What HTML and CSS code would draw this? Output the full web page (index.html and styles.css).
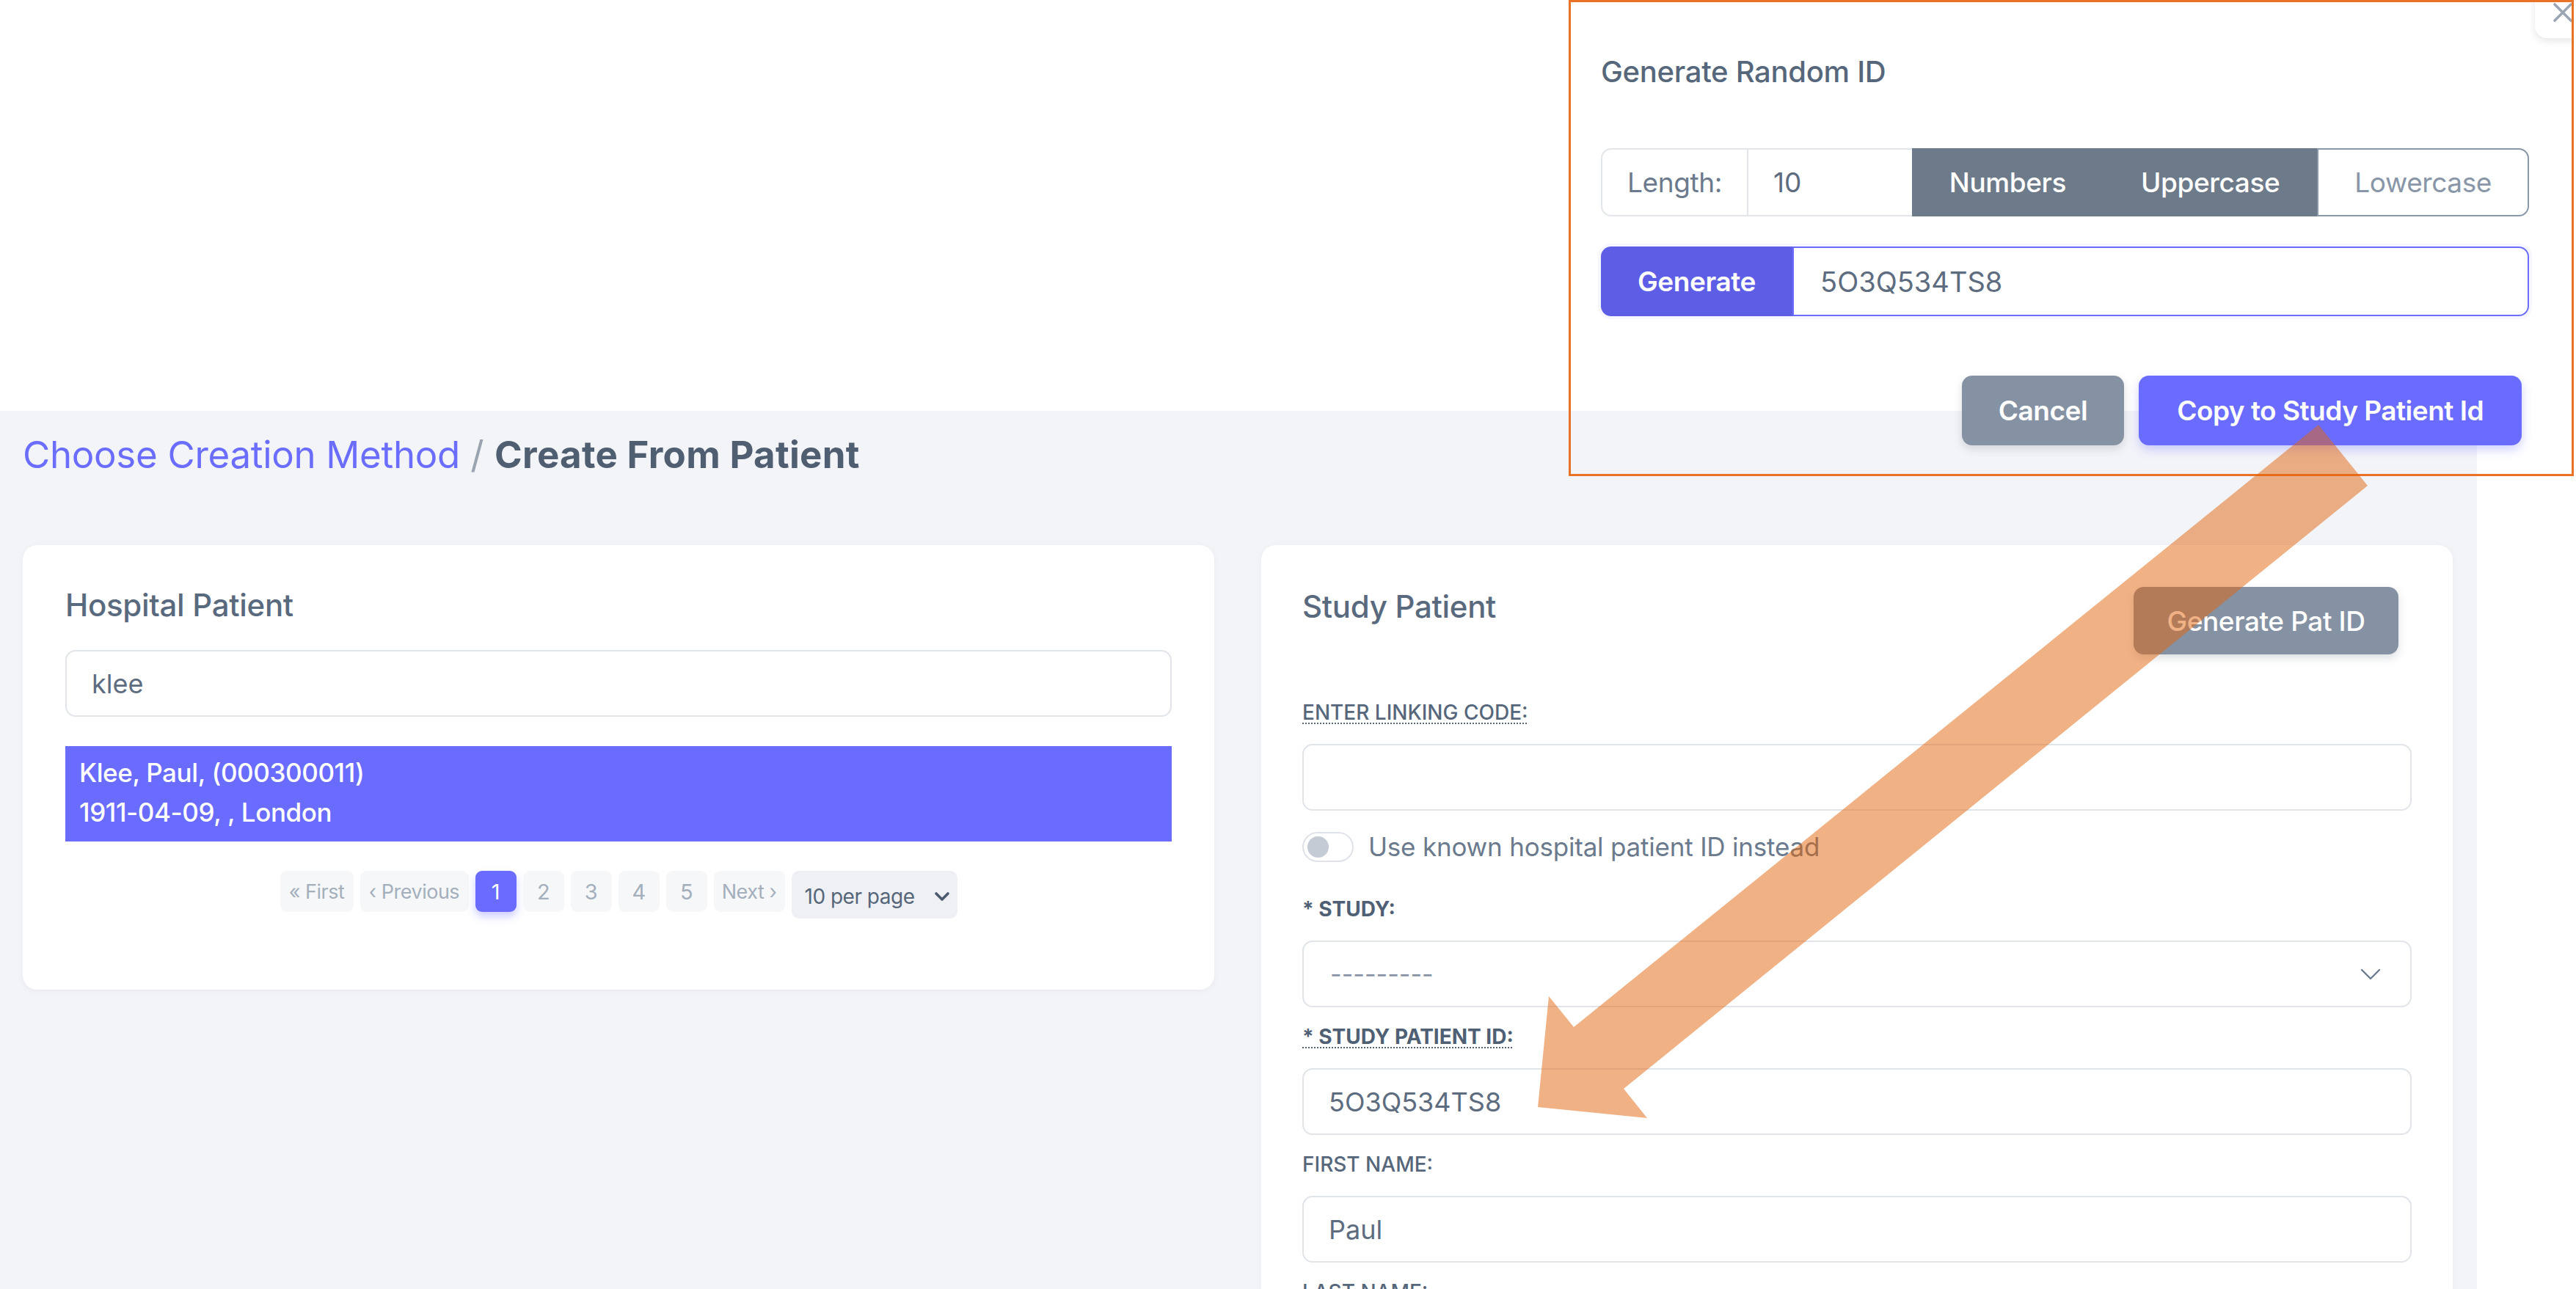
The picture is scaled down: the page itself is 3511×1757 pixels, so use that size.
FILE: index.html
```html
<!DOCTYPE html>
<html lang="en">
<head>
<meta charset="utf-8">
<title>Create From Patient</title>
<link rel="stylesheet" href="styles.css">
</head>
<body>
<div class="page-top"></div>
<main class="content">
  <nav class="breadcrumb"><span class="crumb-link">Choose Creation Method</span> <span class="crumb-sep">/</span> <span class="crumb-current">Create From Patient</span></nav>
  <div class="cols">
    <section class="card card-hospital">
      <h2 class="card-title">Hospital Patient</h2>
      <input class="ctl search" type="text" value="klee">
      <div class="result">
        <div>Klee, Paul, (000300011)</div>
        <div>1911-04-09, , London</div>
      </div>
      <div class="pager">
        <span class="pg pg-first">« First</span>
        <span class="pg pg-prev">‹ Previous</span>
        <span class="pg pg-num active">1</span>
        <span class="pg pg-num">2</span>
        <span class="pg pg-num">3</span>
        <span class="pg pg-num">4</span>
        <span class="pg pg-num">5</span>
        <span class="pg pg-next">Next ›</span>
        <span class="per-page">10 per page <svg class="per-chev" viewBox="0 0 22 14" width="22" height="14"><path d="M3 3l8 8 8-8" fill="none" stroke="#4b5a6d" stroke-width="3.6" stroke-linecap="round" stroke-linejoin="round"/></svg></span>
      </div>
    </section>
    <section class="card card-study">
      <div class="study-head">
        <h2 class="card-title study-title">Study Patient</h2>
        <button class="btn btn-gray btn-genpat">Generate Pat ID</button>
      </div>
      <div class="form">
        <div class="field">
          <label class="lbl dotted">Enter linking code:</label>
          <input class="ctl" type="text" value="">
        </div>
        <div class="toggle-row">
          <span class="switch"><span class="knob"></span></span>
          <span class="toggle-text">Use known hospital patient ID instead</span>
        </div>
        <div class="field">
          <label class="lbl strong">* Study:</label>
          <div class="ctl select"><span class="select-val">---------</span><svg class="sel-chev" viewBox="0 0 28 16" width="28" height="16"><path d="M2 2l12 12 12-12" fill="none" stroke="#6c7b8d" stroke-width="2.4" stroke-linecap="round" stroke-linejoin="round"/></svg></div>
        </div>
        <div class="field">
          <label class="lbl strong dotted">* Study patient ID:</label>
          <input class="ctl" type="text" value="5O3Q534TS8">
        </div>
        <div class="field">
          <label class="lbl">First name:</label>
          <input class="ctl" type="text" value="Paul">
        </div>
        <div class="field">
          <label class="lbl">Last name:</label>
          <input class="ctl" type="text" value="Klee">
        </div>
      </div>
    </section>
  </div>
</main>

<div class="modal">
  <span class="modal-close"><svg viewBox="0 0 28 28" width="28" height="28"><path d="M3 3l22 22M25 3L3 25" stroke="#9ba6b3" stroke-width="3.6" stroke-linecap="round"/></svg></span>
  <h3 class="modal-title">Generate Random ID</h3>
  <div class="igroup row-length">
    <span class="addon">Length:</span>
    <input class="ig-input" type="text" value="10">
    <span class="opt on">Numbers</span>
    <span class="opt on">Uppercase</span>
    <span class="opt off">Lowercase</span>
  </div>
  <div class="igroup row-gen">
    <span class="btn-generate">Generate</span>
    <input class="ig-input gen-input" type="text" value="5O3Q534TS8">
  </div>
  <div class="modal-foot">
    <button class="btn btn-gray btn-cancel">Cancel</button>
    <button class="btn btn-primary btn-copy">Copy to Study Patient Id</button>
  </div>
</div>

<svg class="annot" viewBox="0 0 3511 1757" width="3511" height="1757">
  <polygon points="3160,579 3227,662 2213,1484 2245,1524 2096,1509 2111,1358 2145,1400" fill="rgba(226,100,12,0.5)"/>
</svg>
</body>
</html>
```
FILE: styles.css
```css
html, body {
  margin: 0;
  padding: 0;
  width: 3511px;
  height: 1757px;
  overflow: hidden;
  background: #ffffff;
  font-family: Inter, "Noto Sans", "Liberation Sans", sans-serif;
  color: #5a6a7e;
}

.page-top {
  height: 560px;
}

.content {
  width: 3376px;
  min-height: 1197px;
  box-sizing: border-box;
  background: #f3f4f8;
  padding: 29px 33px 0 31px;
}

.breadcrumb {
  font-size: 51px;
  line-height: 61px;
  white-space: nowrap;
}
.crumb-link { color: #6b6dff; letter-spacing: -0.3px; }
.crumb-sep { color: #9aa4b0; }
.crumb-current { color: #4f5e71; font-weight: 700; letter-spacing: 0.3px; }

.cols {
  display: grid;
  grid-template-columns: 1fr 1fr;
  column-gap: 64px;
  margin-top: 93px;
  align-items: start;
}

.card {
  background: #ffffff;
  border-radius: 20px;
  box-shadow: 0 2px 10px rgba(40, 50, 90, 0.05);
}

.card-title {
  margin: 0;
  font-size: 42px;
  line-height: 50px;
  font-weight: 500;
  color: #5a6a7e;
  letter-spacing: -0.3px;
}

.card-hospital {
  padding: 57px 58px 97px;
  display: flex;
  flex-direction: column;
}
.card-hospital .card-title { margin-bottom: 36px; }

.ctl {
  display: block;
  box-sizing: border-box;
  width: 100%;
  height: 91px;
  margin: 0;
  border: 2px solid #e1e5ea;
  border-radius: 14px;
  background: #fff;
  padding: 0 34px;
  font: inherit;
  font-size: 36px;
  color: #5d6c7f;
  outline: none;
}

.result {
  margin-top: 40px;
  background: #6a6cff;
  color: #ffffff;
  font-size: 35px;
  font-weight: 500;
  line-height: 53.5px;
  padding: 10px 19px 13px;
  letter-spacing: -0.4px;
}

.pager {
  margin-top: 40px;
  display: flex;
  justify-content: center;
  align-items: flex-start;
  gap: 9px;
}
.pg {
  height: 56px;
  box-sizing: border-box;
  display: flex;
  align-items: center;
  justify-content: center;
  background: #f6f7f9;
  border-radius: 9px;
  color: #a4afbc;
  font-size: 27px;
  letter-spacing: -0.5px;
}
.pg-num { width: 56px; font-size: 29px; }
.pg-first { width: 100px; }
.pg-prev { width: 148px; }
.pg-next { width: 97px; }
.pg.active {
  background: #6a6cff;
  color: #fff;
  box-shadow: 0 6px 12px rgba(106, 108, 255, 0.35);
}
.per-page {
  height: 65px;
  width: 226px;
  box-sizing: border-box;
  display: flex;
  align-items: center;
  justify-content: space-between;
  padding: 4px 10px 0 18px;
  background: #eef0f3;
  border-radius: 10px;
  color: #56667a;
  font-size: 28px;
  letter-spacing: -0.5px;
}
.per-chev { flex: none; }

.card-study {
  padding: 57px 56px 0;
}
.study-head {
  display: flex;
  justify-content: space-between;
  align-items: flex-start;
}
.study-title { margin-top: 2px; }

.btn {
  border: none;
  font: inherit;
  color: #ffffff;
  border-radius: 14px;
  cursor: pointer;
  white-space: nowrap;
}
.btn-gray {
  background: #8592a4;
  box-shadow: 0 5px 12px rgba(60, 70, 90, 0.18);
}
.btn-primary {
  background: #6a6cff;
  box-shadow: 0 6px 14px rgba(106, 108, 255, 0.32);
}
.btn-genpat {
  width: 361px;
  height: 92px;
  margin-right: 18px;
  font-size: 37px;
  font-weight: 500;
  letter-spacing: -0.4px;
}

.form {
  margin-top: 58px;
  display: flex;
  flex-direction: column;
}
.field { margin-bottom: 19px; }
.lbl {
  display: block;
  font-size: 28px;
  line-height: 42px;
  text-transform: uppercase;
  font-weight: 500;
  color: #56677b;
  margin-bottom: 22px;
}
.lbl.strong { font-weight: 700; color: #4f6074; }
.lbl.dotted {
  display: table;
  text-decoration: underline dotted 2px;
  text-underline-offset: 4px;
}

.toggle-row {
  display: flex;
  align-items: center;
  margin-top: 9px;
  margin-bottom: 43px;
  height: 42px;
}
.switch {
  width: 70px;
  height: 41px;
  box-sizing: border-box;
  border: 2px solid #dfe3e9;
  border-radius: 21px;
  display: flex;
  align-items: center;
  padding-left: 5px;
}
.knob {
  width: 29px;
  height: 29px;
  border-radius: 50%;
  background: #c4cbd5;
}
.toggle-text {
  margin-left: 20px;
  font-size: 35px;
  color: #6b7a8c;
  letter-spacing: -0.2px;
}

.select {
  display: flex;
  align-items: center;
  justify-content: space-between;
  padding: 0 40px 0 36px;
}
.select-val { color: #8995a5; font-size: 34px; }

/* Modal */
.modal {
  position: absolute;
  left: 2138px;
  top: 0;
  width: 1370px;
  height: 649px;
  box-sizing: border-box;
  border: 3px solid #ea7226;
  overflow: hidden;
  padding: 0 58px 0 41px;
}
.modal-close {
  position: absolute;
  top: -27px;
  right: -26px;
  width: 76px;
  height: 76px;
  background: #fff;
  border-radius: 16px;
  box-shadow: 0 4px 10px rgba(40, 50, 70, 0.12);
  display: flex;
  align-items: center;
  justify-content: center;
}
.modal-close svg { margin-top: 6px; }
.modal-title {
  margin: 71px 0 0;
  font-size: 40px;
  line-height: 48px;
  font-weight: 500;
  color: #56677b;
  letter-spacing: -0.3px;
}
.igroup {
  display: flex;
  align-items: stretch;
}
.row-length {
  margin-top: 80px;
  height: 93px;
}
.addon {
  display: flex;
  align-items: center;
  padding: 0 34px;
  border: 2px solid #e2e6ea;
  border-radius: 14px 0 0 14px;
  font-size: 37px;
  color: #6b7a8c;
  letter-spacing: -0.4px;
}
.ig-input {
  flex: 1 1 auto;
  min-width: 0;
  box-sizing: border-box;
  margin: 0;
  border: 2px solid #e2e6ea;
  border-left: none;
  background: #fff;
  padding: 0 34px;
  font: inherit;
  font-size: 37px;
  color: #5d6c7f;
  outline: none;
}
.row-length .ig-input { border-right: none; }
.opt {
  display: flex;
  align-items: center;
  padding: 0 51px;
  font-size: 37px;
  letter-spacing: -0.4px;
}
.opt.on {
  background: #6d7a8a;
  color: #ffffff;
  font-weight: 500;
}
.opt.off {
  background: #fff;
  color: #8896a7;
  border: 2px solid #8a97a8;
  border-radius: 0 14px 14px 0;
  padding: 0 49px;
}
.row-gen {
  margin-top: 41px;
  height: 95px;
  box-shadow: 0 0 0 4px rgba(106, 108, 255, 0.06);
  border-radius: 14px;
}
.btn-generate {
  display: flex;
  align-items: center;
  padding: 0 50px;
  background: #5e5de6;
  color: #fff;
  font-size: 37px;
  font-weight: 600;
  border-radius: 14px 0 0 14px;
  letter-spacing: -0.4px;
}
.gen-input {
  border: 2px solid #6c6dff;
  border-radius: 0 14px 14px 0;
  padding: 0 36px;
  font-size: 38px;
}
.modal-foot {
  margin-top: 81px;
  display: flex;
  justify-content: flex-end;
  gap: 20px;
  padding-right: 10px;
}
.btn-cancel, .btn-copy {
  height: 95px;
  padding: 0 52px;
  font-size: 37px;
  font-weight: 600;
  letter-spacing: -0.5px;
}
.btn-cancel { padding: 0 50px; }

.annot {
  position: absolute;
  left: 0;
  top: 0;
  pointer-events: none;
}
```
